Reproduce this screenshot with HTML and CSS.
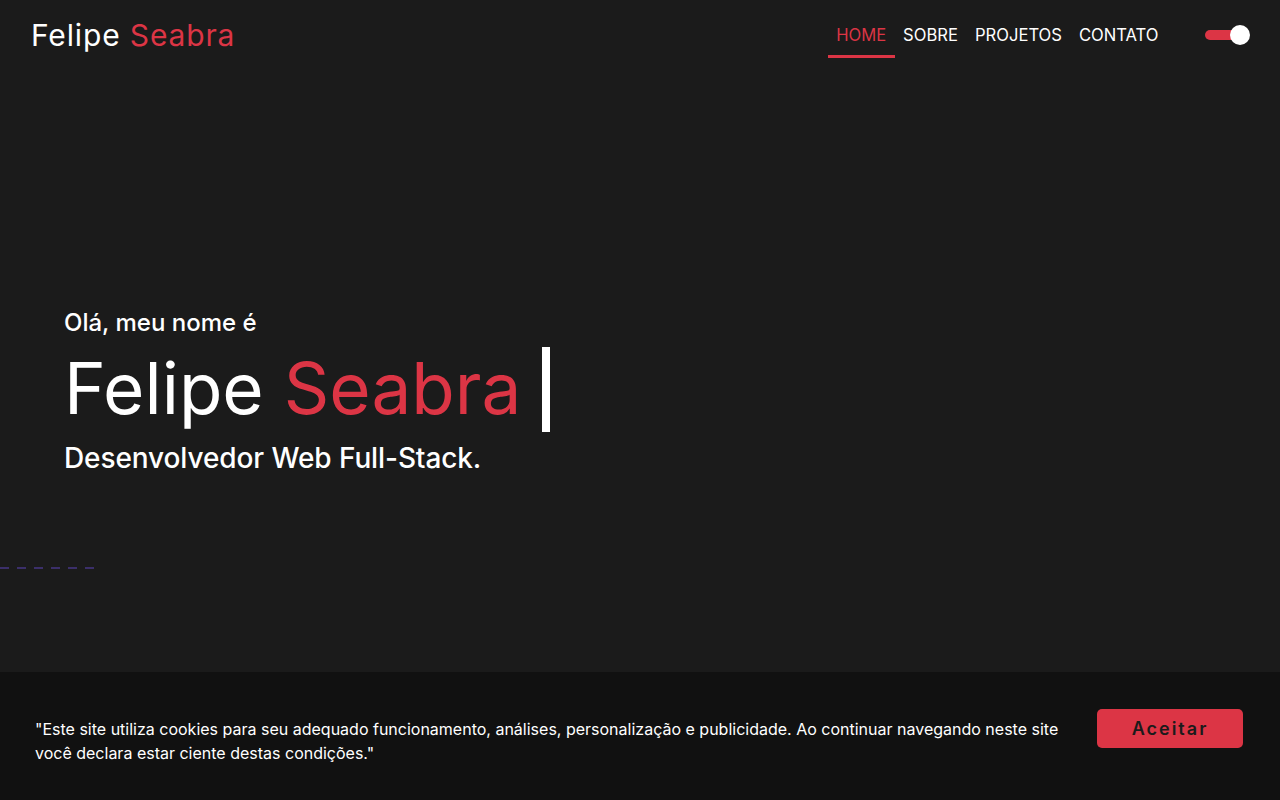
FILE: index.html
```html
<!DOCTYPE html>
<html lang="pt-BR">
<head>
<meta charset="utf-8">
<title>Felipe Seabra</title>
<link rel="stylesheet" href="styles.css">
</head>
<body>
<header class="topbar">
  <a class="logo" href="#">Felipe <span class="accent">Seabra</span></a>
  <nav class="nav">
    <a class="nav-link active" href="#">HOME</a>
    <a class="nav-link" href="#">SOBRE</a>
    <a class="nav-link" href="#">PROJETOS</a>
    <a class="nav-link" href="#">CONTATO</a>
  </nav>
  <div class="toggle"><span class="track"></span><span class="knob"></span></div>
</header>
<main class="hero">
  <p class="hello">Olá, meu nome é</p>
  <h1 class="name">Felipe <span class="accent">Seabra</span><span class="cursor"></span></h1>
  <p class="role">Desenvolvedor Web Full-Stack.</p>
</main>
<div class="dashes"></div>
<div class="cookie">
  <p class="cookie-text">"Este site utiliza cookies para seu adequado funcionamento, análises, personalização e publicidade. Ao continuar navegando neste site você declara estar ciente destas condições."</p>
  <button class="accept">Aceitar</button>
</div>
</body>
</html>
```
FILE: styles.css
```css
* { box-sizing: border-box; }
html, body { margin: 0; padding: 0; }
body {
  background: #1b1b1b;
  color: #fff;
  font-family: Inter, "Noto Sans", sans-serif;
  height: 800px;
  overflow: hidden;
}
.accent { color: #dc3545; }
.topbar {
  display: flex;
  align-items: center;
  height: 70px;
  padding: 0 30px 0 31px;
}
.logo {
  font-size: 30px;
  color: #fff;
  text-decoration: none;
  letter-spacing: 0.85px;
}
.nav {
  display: flex;
  margin-left: auto;
  align-self: stretch;
}
.nav-link {
  display: flex;
  align-items: center;
  padding: 14px 8.5px 0;
  font-size: 16.6px;
  color: #fff;
  text-decoration: none;
  border-bottom: 3px solid transparent;
  height: 58px;
}
.nav-link.active {
  color: #dc3545;
  border-bottom-color: #dc3545;
}
.toggle {
  position: relative;
  width: 45px;
  height: 20px;
  margin-left: 38px;
  display: flex;
  align-items: center;
}
.track {
  display: block;
  width: 38px;
  height: 10px;
  border-radius: 5px;
  background: #dc3545;
}
.knob {
  position: absolute;
  right: 0;
  top: 0;
  width: 20px;
  height: 20px;
  border-radius: 50%;
  background: #fff;
}
.hero {
  padding: 238px 64px 0;
}
.hello {
  margin: 0;
  font-size: 24px;
  font-weight: 500;
  line-height: 30px;
}
.name {
  margin: 0;
  font-size: 71px;
  font-weight: 400;
  line-height: 101px;
}
.cursor {
  display: inline-block;
  width: 8px;
  height: 85px;
  background: #fff;
  margin-left: 21px;
  vertical-align: -18px;
}
.role {
  margin: 0;
  font-size: 28px;
  font-weight: 500;
  line-height: 38px;
  letter-spacing: -0.1px;
}
.dashes {
  width: 94px;
  height: 2px;
  margin-top: 90px;
  background: repeating-linear-gradient(90deg, #3b2f6a 0 9px, transparent 9px 17px);
}
.cookie {
  position: fixed;
  left: 0;
  right: 0;
  bottom: 0;
  height: 128px;
  background: #111;
  display: flex;
  align-items: center;
  padding: 0 37px 0 35px;
  gap: 30px;
}
.cookie-text {
  margin: 10px 0 0;
  font-size: 16px;
  line-height: 24px;
  color: #fff;
  flex: 1;
  max-width: 1032px;
}
.accept {
  margin-left: auto;
  margin-top: -16px;
  width: 146px;
  height: 39px;
  background: #dc3545;
  border: none;
  border-radius: 5px;
  font-family: Inter, sans-serif;
  font-size: 18px;
  font-weight: 600;
  letter-spacing: 2px;
  color: #1b1b1b;
}
```
